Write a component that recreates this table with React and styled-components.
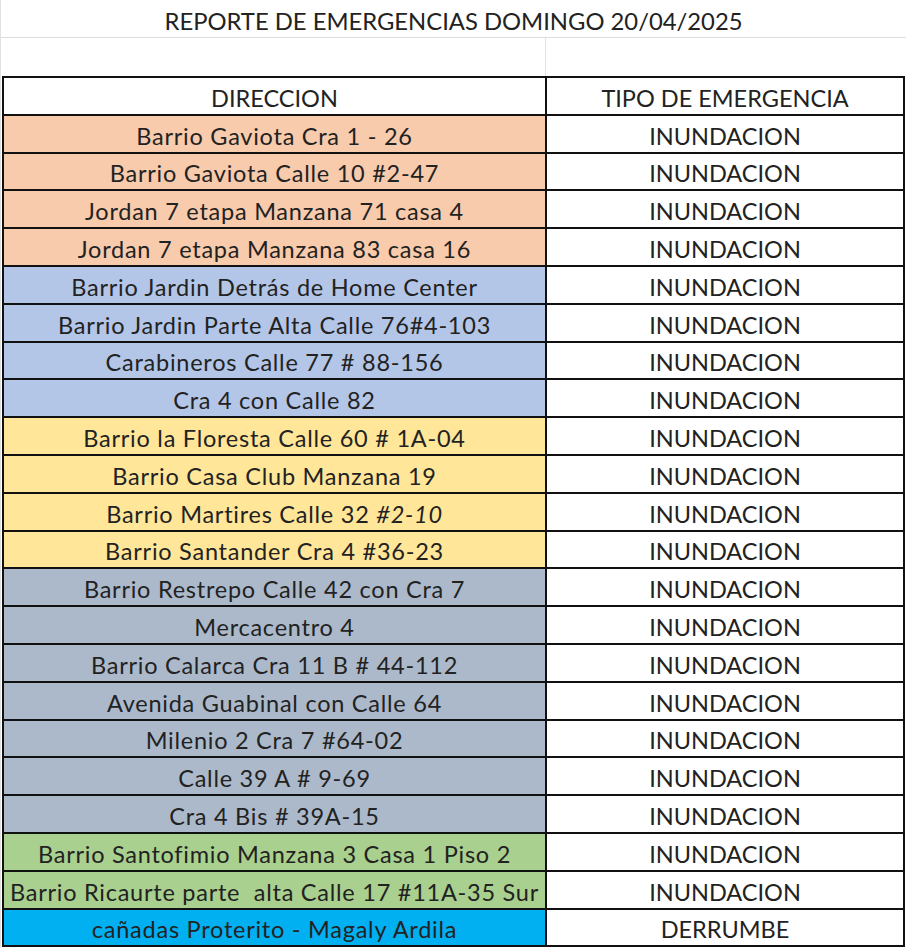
import { createGlobalStyle } from 'styled-components';
import styled from 'styled-components';

const GlobalStyle = createGlobalStyle`
  html, body {
    margin: 0;
    padding: 0;
    background: #fff;
  }
  body {
    font-family: Lato, "Open Sans", "Liberation Sans", sans-serif;
    color: #222;
  }
`;

const fills = {
  peach: '#f8cbad',
  blue: '#b4c6e7',
  yellow: '#ffe699',
  slate: '#acb9ca',
  green: '#a9d08e',
  cyan: '#00b0f0',
};

const Sheet = styled.div`
  width: 906px;
  height: 948px;
  overflow: hidden;
  border-left: 1px solid #e2e2e2;
  box-sizing: border-box;
`;

const TitleRow = styled.div`
  height: 38px;
  display: flex;
  align-items: center;
  justify-content: center;
  border-bottom: 1px solid #dedede;
  box-sizing: border-box;
  font-size: 23.8px;
  padding-top: 4px;
`;

const BlankRow = styled.div`
  height: 38px;
  display: grid;
  grid-template-columns: 545px 1fr;
  & > div:first-child {
    border-right: 1px solid #e4e4e4;
  }
`;

const Table = styled.div`
  margin-left: 1px;
  width: 903px;
  display: grid;
  grid-template-columns: 541px 356px;
  grid-auto-rows: 35.8px;
  gap: 2px;
  padding: 2px;
  box-sizing: border-box;
  background: #111;
`;

const Cell = styled.div`
  display: flex;
  align-items: center;
  justify-content: center;
  background: ${(p) => (p.$fill ? fills[p.$fill] : '#fff')};
  font-size: 23.5px;
  letter-spacing: ${(p) => (p.$fill ? '0.75px' : '0')};
  white-space: pre;
  padding-top: 4px;
  box-sizing: border-box;
`;

const Italic = styled.i`
  font-style: italic;
`;

const rows = [
  ['Barrio Gaviota Cra 1 - 26', 'peach'],
  ['Barrio Gaviota Calle 10 #2-47', 'peach'],
  ['Jordan 7 etapa Manzana 71 casa 4', 'peach'],
  ['Jordan 7 etapa Manzana 83 casa 16', 'peach'],
  ['Barrio Jardin Detrás de Home Center', 'blue'],
  ['Barrio Jardin Parte Alta Calle 76#4-103', 'blue'],
  ['Carabineros Calle 77 # 88-156', 'blue'],
  ['Cra 4 con Calle 82', 'blue'],
  ['Barrio la Floresta Calle 60 # 1A-04', 'yellow'],
  ['Barrio Casa Club Manzana 19', 'yellow'],
  [<>Barrio Martires Calle 32 <Italic>#2-10</Italic></>, 'yellow'],
  ['Barrio Santander Cra 4 #36-23', 'yellow'],
  ['Barrio Restrepo Calle 42 con Cra 7', 'slate'],
  ['Mercacentro 4', 'slate'],
  ['Barrio Calarca Cra 11 B # 44-112', 'slate'],
  ['Avenida Guabinal con Calle 64', 'slate'],
  ['Milenio 2 Cra 7 #64-02', 'slate'],
  ['Calle 39 A # 9-69', 'slate'],
  ['Cra 4 Bis # 39A-15', 'slate'],
  ['Barrio Santofimio Manzana 3 Casa 1 Piso 2', 'green'],
  ['Barrio Ricaurte parte  alta Calle 17 #11A-35 Sur', 'green'],
  ['cañadas Proterito - Magaly Ardila', 'cyan', 'DERRUMBE'],
];

export default function App() {
  return (
    <Sheet>
      <GlobalStyle />
      <TitleRow>REPORTE DE EMERGENCIAS DOMINGO 20/04/2025</TitleRow>
      <BlankRow>
        <div />
        <div />
      </BlankRow>
      <Table>
        <Cell>DIRECCION</Cell>
        <Cell>TIPO DE EMERGENCIA</Cell>
        {rows.map(([address, fill, kind], i) => (
          <>
            <Cell key={`a${i}`} $fill={fill}>{address}</Cell>
            <Cell key={`t${i}`}>{kind || 'INUNDACION'}</Cell>
          </>
        ))}
      </Table>
    </Sheet>
  );
}
